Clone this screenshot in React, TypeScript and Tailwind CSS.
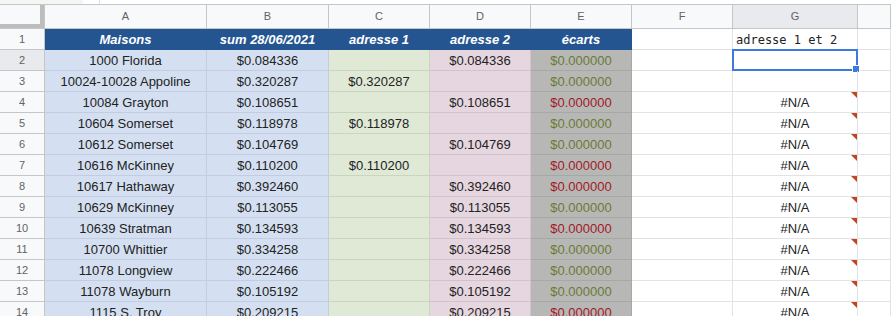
import * as React from "react";

type Row = {
  n: number;
  name: string;
  sum: string;
  a1: string;
  a2: string;
  bad: boolean;
  g: string;
};

const rows: Row[] = [
  { n: 2, name: "1000 Florida", sum: "$0.084336", a1: "", a2: "$0.084336", bad: false, g: "" },
  { n: 3, name: "10024-10028 Appoline", sum: "$0.320287", a1: "$0.320287", a2: "", bad: false, g: "" },
  { n: 4, name: "10084 Grayton", sum: "$0.108651", a1: "", a2: "$0.108651", bad: true, g: "#N/A" },
  { n: 5, name: "10604 Somerset", sum: "$0.118978", a1: "$0.118978", a2: "", bad: false, g: "#N/A" },
  { n: 6, name: "10612 Somerset", sum: "$0.104769", a1: "", a2: "$0.104769", bad: false, g: "#N/A" },
  { n: 7, name: "10616 McKinney", sum: "$0.110200", a1: "$0.110200", a2: "", bad: true, g: "#N/A" },
  { n: 8, name: "10617 Hathaway", sum: "$0.392460", a1: "", a2: "$0.392460", bad: true, g: "#N/A" },
  { n: 9, name: "10629 McKinney", sum: "$0.113055", a1: "", a2: "$0.113055", bad: false, g: "#N/A" },
  { n: 10, name: "10639 Stratman", sum: "$0.134593", a1: "", a2: "$0.134593", bad: true, g: "#N/A" },
  { n: 11, name: "10700 Whittier", sum: "$0.334258", a1: "", a2: "$0.334258", bad: false, g: "#N/A" },
  { n: 12, name: "11078 Longview", sum: "$0.222466", a1: "", a2: "$0.222466", bad: false, g: "#N/A" },
  { n: 13, name: "11078 Wayburn", sum: "$0.105192", a1: "", a2: "$0.105192", bad: false, g: "#N/A" },
  { n: 14, name: "1115 S. Troy", sum: "$0.209215", a1: "", a2: "$0.209215", bad: true, g: "#N/A" },
];

const cellBase = "h-full shrink-0 border-r border-b flex items-center justify-center whitespace-nowrap overflow-hidden";
// sheets sits text a little low in the cell
const dataCell = `${cellBase} pt-[2px]`;

function RowNum({ n, active }: { n: number; active?: boolean }) {
  return (
    <div
      className={`w-[45px] h-full shrink-0 border-r border-b border-[#c4c7c5] flex items-center justify-center pt-[1px] text-[11px] text-[#5f6368] ${
        active ? "bg-[#e8eaed]" : "bg-[#f8f9fa]"
      }`}
    >
      {n}
    </div>
  );
}

function ErrorMark() {
  return (
    <div className="absolute top-0 right-0 w-0 h-0 border-t-[6px] border-l-[6px] border-t-[#c5441c] border-l-transparent" />
  );
}

export default function App() {
  return (
    <div className="w-[891px] h-[316px] overflow-hidden bg-white font-['Liberation_Sans',Arial,sans-serif] text-[13px] text-[#222]">
      {/* bit of formula bar above */}
      <div className="h-[5px] flex border-b border-[#c4c7c5]">
        <div className="w-[83px] bg-[#f5f6f4]" />
        <div className="w-[17px] border-r border-[#e0e0e0]" />
      </div>

      {/* column letters */}
      <div className="flex h-[24px] text-[11px] text-[#5f6368] bg-[#f8f9fa]">
        <div className="w-[45px] h-full shrink-0 border-r border-b border-[#c4c7c5]">
          <div className="w-[44px] h-[23px] border-r-[4px] border-b-[4px] border-[#bdbdbd]" />
        </div>
        <div className={`${cellBase} w-[162px] border-[#c4c7c5]`}>A</div>
        <div className={`${cellBase} w-[122px] border-[#c4c7c5]`}>B</div>
        <div className={`${cellBase} w-[101px] border-[#c4c7c5]`}>C</div>
        <div className={`${cellBase} w-[101px] border-[#c4c7c5]`}>D</div>
        <div className={`${cellBase} w-[101px] border-[#c4c7c5]`}>E</div>
        <div className={`${cellBase} w-[101px] border-[#c4c7c5]`}>F</div>
        <div className={`${cellBase} w-[125px] border-[#c4c7c5] bg-[#e8eaed]`}>G</div>
        <div className={`${cellBase} flex-1 border-[#c4c7c5]`} />
      </div>

      {/* row 1: headers */}
      <div className="flex h-[21px]">
        <RowNum n={1} />
        <div className="flex h-full bg-[#245591] text-white font-bold italic">
          <div className={`${dataCell} w-[162px] border-[#245591]`}>Maisons</div>
          <div className={`${dataCell} w-[122px] border-[#245591]`}>sum 28/06/2021</div>
          <div className={`${dataCell} w-[101px] border-[#245591]`}>adresse 1</div>
          <div className={`${dataCell} w-[101px] border-[#245591]`}>adresse 2</div>
          <div className={`${dataCell} w-[101px] border-[#245591]`}>écarts</div>
        </div>
        <div className={`${cellBase} w-[101px] border-[#e2e3e3]`} />
        <div className={`${dataCell} w-[125px] border-[#e2e3e3] !justify-start pl-[3px] font-['DejaVu_Sans_Mono','Liberation_Mono',monospace] text-[12px] text-[#222]`}>
          adresse 1 et 2
        </div>
        <div className={`${cellBase} flex-1 border-[#e2e3e3]`} />
      </div>

      {rows.map((r) => (
        <div key={r.n} className="flex h-[21px]">
          <RowNum n={r.n} active={r.n === 2} />
          <div className={`${dataCell} w-[162px] bg-[#d4e0f1] border-[#c2cee0]`}>{r.name}</div>
          <div className={`${dataCell} w-[122px] bg-[#d4e0f1] border-[#c2cee0]`}>{r.sum}</div>
          <div className={`${dataCell} w-[101px] bg-[#dfe9d6] border-[#c9d5bf]`}>{r.a1}</div>
          <div className={`${dataCell} w-[101px] bg-[#e6d6df] border-[#d2c2cb]`}>{r.a2}</div>
          <div
            className={`${dataCell} w-[101px] bg-[#b7b8b5] border-[#a7a8a5] ${
              r.bad ? "text-[#a3182a]" : "text-[#6b7a36]"
            }`}
          >
            $0.000000
          </div>
          <div className={`${cellBase} w-[101px] border-[#e2e3e3]`} />
          <div className={`${dataCell} w-[125px] border-[#e2e3e3] relative !overflow-visible`}>
            {r.g}
            {r.g && <ErrorMark />}
            {r.n === 2 && (
              <>
                <div className="absolute -left-px -top-px right-[-1px] bottom-[-1px] border-2 border-[#3b7ae0]" />
                <div className="absolute right-[-3px] bottom-[-3px] w-[6px] h-[6px] bg-[#3b7ae0] border border-white box-content" />
              </>
            )}
          </div>
          <div className={`${cellBase} flex-1 border-[#e2e3e3]`} />
        </div>
      ))}
    </div>
  );
}
